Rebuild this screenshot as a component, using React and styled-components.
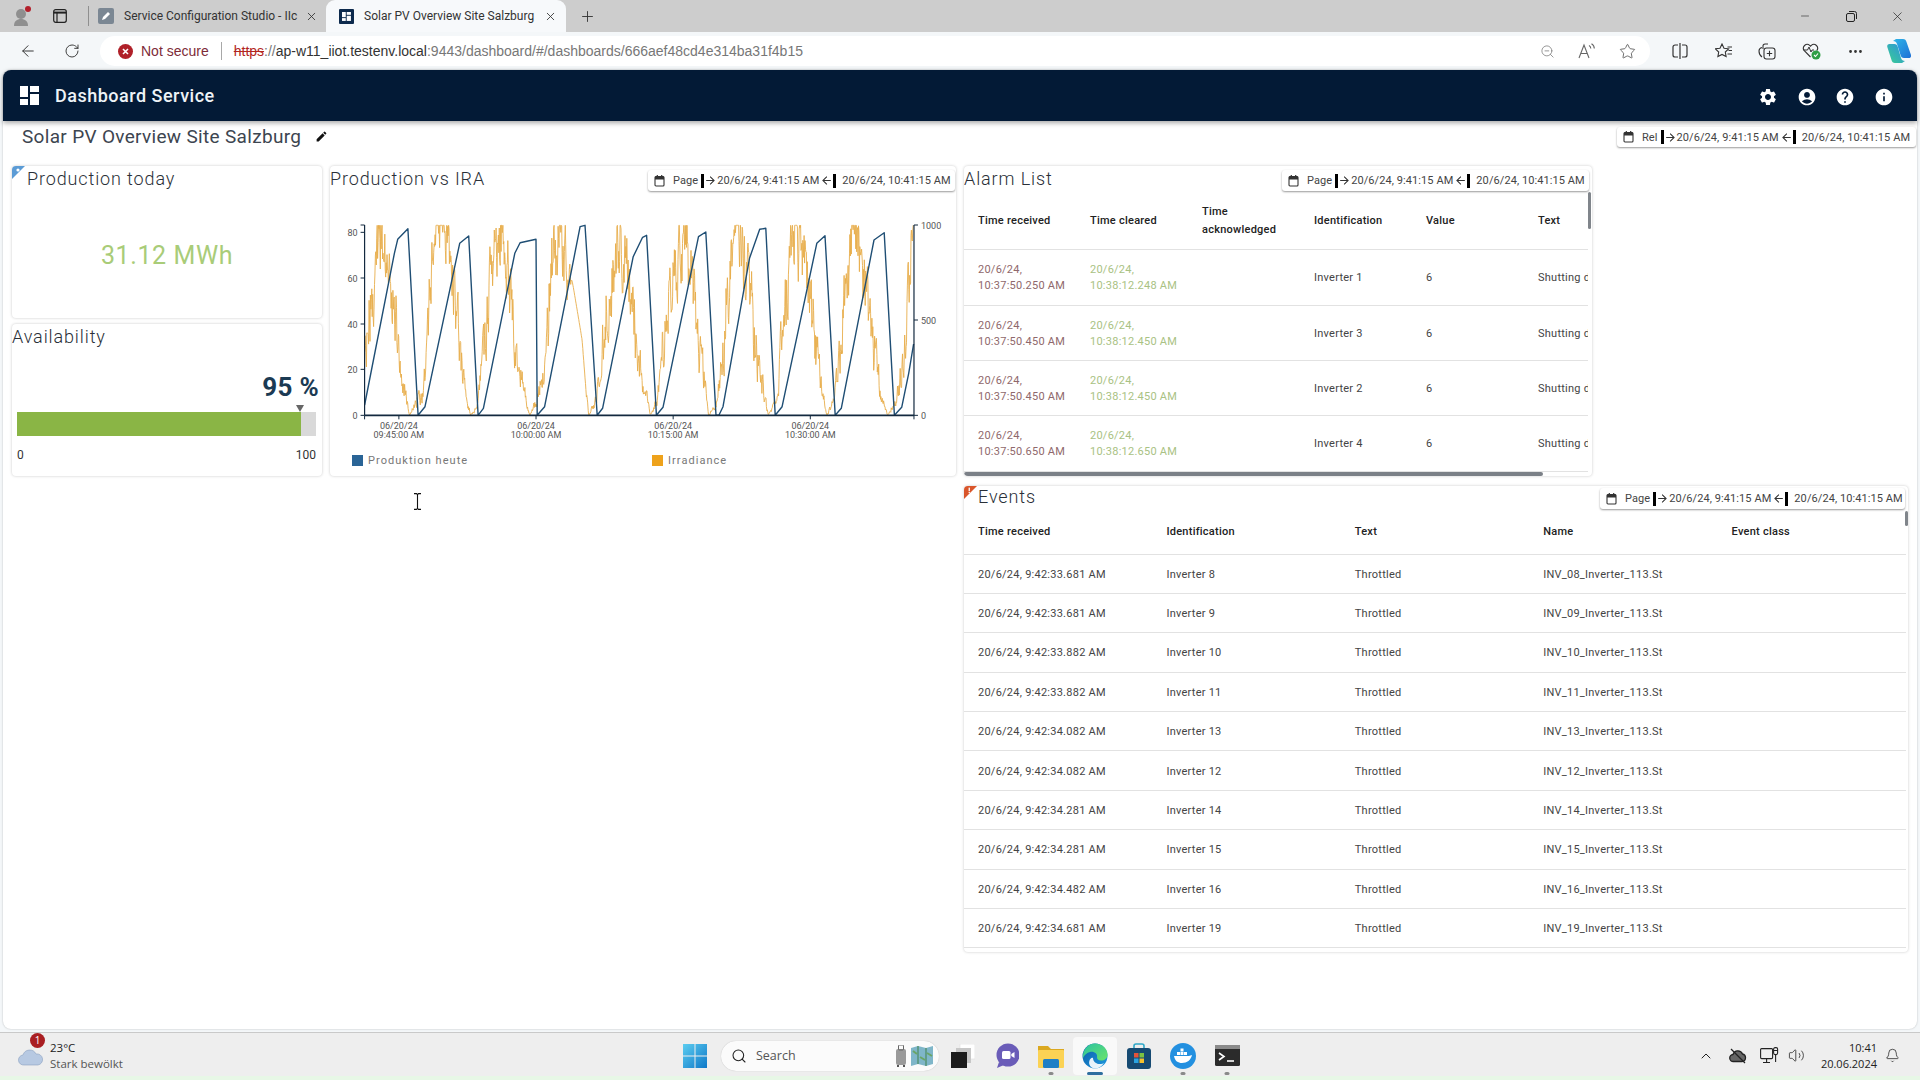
import React from 'react';
import styled, { createGlobalStyle } from 'styled-components';
import { ArrowLeft, RotateCw, ZoomOut, Star, MoreHorizontal, X, Plus, Minus, Search, ChevronUp, Bell, Volume2 } from 'lucide-react';
import { MdSettings, MdAccountCircle, MdHelp, MdInfo, MdEdit, MdArrowForward, MdArrowBack } from 'react-icons/md';

const Global = createGlobalStyle`
  html, body { margin: 0; padding: 0; height: 100%; overflow: hidden; background: #f4f7f9; }
  body { font-family: Roboto, "Liberation Sans", sans-serif; color: #222; }
  * { box-sizing: border-box; }
`;

const Screen = styled.div`
  width: 1920px; height: 1080px; display: flex; flex-direction: column; position: relative; overflow: hidden;
`;

/* ---------- browser chrome ---------- */
const TabStrip = styled.div`
  height: 32px; background: #cdcdcd; display: flex; align-items: stretch; padding-left: 12px; flex: none;
  font-family: Roboto, sans-serif;
`;
const StripIcon = styled.div`
  display: flex; align-items: center; justify-content: center; width: ${p => p.$w}px; margin-left: ${p => p.$ml || 0}px;
`;
const TabSep = styled.div`
  width: 1px; height: 20px; background: #8f8f8f; align-self: center; margin: 0 9px 0 20px;
`;
const Tab = styled.div`
  width: ${p => p.$w}px; display: flex; align-items: center; position: relative; padding-left: ${p => p.$pl}px; gap: ${p => p.$gap}px;
  font-size: 12px; color: #333; white-space: nowrap;
  background: ${p => p.$active ? '#f7f9fb' : 'transparent'};
  border-radius: ${p => p.$active ? '9px 9px 0 0' : '0'};
`;
const TabLabel = styled.span`
  width: ${p => p.$w}px; display: block;
`;
const TabClose = styled.span`
  display: flex; align-items: center; justify-content: center; width: 16px; margin-left: ${p => p.$ml}px; color: #333;
`;
const NewTab = styled.div`
  display: flex; align-items: center; margin-left: 13px; color: #333;
`;
const WindowControls = styled.div`
  margin-left: auto; display: flex;
`;
const WinButton = styled.div`
  width: 46px; display: flex; align-items: center; justify-content: center; color: #222;
`;

const Toolbar = styled.div`
  height: 38px; background: #f4f7f9; display: flex; align-items: center; padding-left: 6px; flex: none;
  font-family: "Liberation Sans", sans-serif;
`;
const NavButton = styled.div`
  width: ${p => p.$w || 44}px; height: 30px; display: flex; align-items: center; justify-content: center; color: ${p => p.$c || '#333'}; flex: none;
`;
const AddressPill = styled.div`
  width: 1550px; height: 30px; margin-left: 6px; background: #fff; border-radius: 15px; display: flex; align-items: center; padding: 0 3px 0 18px; font-size: 14px; flex: none;
`;
const NotSecure = styled.span`
  color: #7d2b38; margin-left: 8px;
`;
const AddrSep = styled.span`
  width: 1px; height: 18px; background: #a8a8a8; margin: 0 12px 0 12px;
`;
const Url = styled.span`
  color: #777; white-space: nowrap; flex: 1;
  s { color: #b3261e; }
  b { font-weight: 400; color: #333; }
`;
const PillIcons = styled.div`
  display: flex; color: #666;
`;
const ToolIcons = styled.div`
  display: flex; margin-left: 8px;
`;

/* ---------- app ---------- */
const AppFrame = styled.div`
  flex: 1; min-height: 0; margin: 0 3px 3px; background: #fff; border-radius: 8px; display: flex; flex-direction: column;
  box-shadow: 0 0 2px rgba(0,0,0,.25); position: relative;
`;
const AppHeader = styled.header`
  height: 51px; background: #031a36; border-radius: 8px 8px 0 0; display: flex; align-items: center; padding: 0 23.500px 0 17px; color: #fff; flex: none;
  box-shadow: 0 2px 5px rgba(0,0,0,.35);
`;
const AppTitle = styled.div`
  font-size: 18px; font-weight: 500; margin-left: 16px; letter-spacing: .5px; color: #eef3f7;
`;
const HeaderIcons = styled.div`
  margin-left: auto; display: flex; gap: 18.500px; padding-top: 2px;
`;
const TitleRow = styled.div`
  height: 45px; flex: none; display: flex; align-items: flex-start; justify-content: space-between; padding: 5px 1px 0 19px;
`;
const PageTitle = styled.h1`
  margin: 0; font-size: 19px; font-weight: 400; line-height: 21px; letter-spacing: .32px; color: #3d4550; display: flex; align-items: center; gap: 14px;
`;
const Board = styled.div`
  display: grid; grid-template-columns: 310px 626px 628px 308px; grid-template-rows: 152px 152px 470px; column-gap: 8px; row-gap: 6px; padding-left: 9px;
`;
const Card = styled.section`
  background: #fff; border-radius: 4px; box-shadow: 0 0 3px rgba(0,0,0,.22); position: relative;
  grid-column: ${p => p.$col}; grid-row: ${p => p.$row}; margin-top: ${p => p.$mt || 0}px; overflow: hidden; min-width: 0;
  display: flex; flex-direction: column;
`;
const CardHead = styled.div`
  height: 25px; display: flex; align-items: flex-start; justify-content: space-between; flex: none; padding: 0 ${p => p.$pr ?? 1}px 0 ${p => p.$pl ?? 0}px;
`;
const CardTitle = styled.h2`
  margin: ${p => p.$mt ?? 3}px 0 0; font-size: 18px; line-height: 20px; font-weight: 300; letter-spacing: .88px; color: #2a3038; white-space: nowrap;
`;
const Corner = styled.svg`
  position: absolute; left: 0; top: 0; width: 13px; height: 13px;
`;
const Picker = styled.div`
  flex: none; margin-top: ${p => p.$mt}px; height: ${p => p.$h}px; width: ${p => p.$w}px; display: flex; align-items: center; background: #fff; border-radius: 3px;
  box-shadow: 0 1px 2px rgba(0,0,0,.4); padding-left: 6px; font-size: 11px; letter-spacing: .08px; color: #444; white-space: nowrap; overflow: hidden;
`;
const PickerKind = styled.span`
  margin-left: 8px; margin-right: 3px;
`;
const PickerBar = styled.span`
  width: 3px; height: 14px; background: #000; flex: none; margin: 0 ${p => p.$mr || 0}px 0 ${p => p.$ml || 0}px;
`;
const BigValue = styled.div`
  flex: 1; display: flex; align-items: center; justify-content: center; font-size: 25px; letter-spacing: .6px; color: #a9cc78; padding-top: 2px;
`;
const GaugeBody = styled.div`
  padding: 23px 6px 0 5px; display: flex; flex-direction: column;
`;
const GaugeValue = styled.div`
  text-align: right; font-size: 26px; line-height: 30px; font-weight: 700; color: #1b3a53; margin-right: -3px; letter-spacing: .3px;
`;
const GaugeMarker = styled.div`
  height: 10px; position: relative;
  &::after { content: ''; position: absolute; left: 279px; top: 3px; border: 4px solid transparent; border-top: 7px solid #666; border-bottom: 0; }
`;
const GaugeTrack = styled.div`
  height: 24px; background: #d9d9d9;
`;
const GaugeFill = styled.div`
  height: 100%; background: #8ab545;
`;
const GaugeScale = styled.div`
  display: flex; justify-content: space-between; font-size: 12px; margin-top: 12px; color: #333;
`;
const ChartSvg = styled.svg`
  display: block; flex: none;
  text { font-family: Roboto, sans-serif; font-size: 9px; fill: #555; }
`;
const Legend = styled.div`
  display: flex; padding-left: 22px; margin-top: 1px;
`;
const LegendItem = styled.div`
  width: 300px; display: flex; align-items: center; gap: 5px; font-size: 11px; letter-spacing: 1.05px; color: #777;
  i { width: 11px; height: 11px; background: ${p => p.$c}; display: block; }
`;
const TableClip = styled.div`
  flex: 1; min-height: 0; overflow: hidden; width: ${p => p.$w}px; position: relative;
`;
const Table = styled.table`
  border-collapse: collapse; table-layout: fixed; width: ${p => p.$w}px; font-size: 11px; letter-spacing: .25px;
`;
const HeadRow = styled.tr`
  height: ${p => p.$h}px; border-bottom: 1px solid #e2e2e2;
`;
const Row = styled.tr`
  height: ${p => p.$h}px; border-bottom: 1px solid #e2e2e2;
`;
const Th = styled.th`
  text-align: left; font-weight: 500; padding: ${p => p.$pt || 0}px 10px 0 14px; line-height: 18px; color: #222;
`;
const Td = styled.td`
  padding: 2px 10px 0 14px; line-height: 16px; color: ${p => p.$c || '#444'}; white-space: ${p => p.$wrap ? 'normal' : 'nowrap'}; overflow: hidden;
`;
const HScroll = styled.div`
  position: absolute; left: 0; bottom: 0; height: 4px; width: 579px; background: #7b8087; border-radius: 2px;
`;
const VScroll = styled.div`
  position: absolute; right: ${p => p.$r}px; top: ${p => p.$t}px; width: 3px; height: ${p => p.$h}px; background: #80858b; border-radius: 2px;
`;
const IBeam = styled.svg`
  position: absolute; left: 410px; top: 423px; width: 9px; height: 17px;
`;

/* ---------- taskbar ---------- */
const Taskbar = styled.div`
  height: 44px; background: #eeeeee; border-top: 1px solid #c9c9c9; display: grid; grid-template-columns: 683px auto 1fr; align-items: center; flex: none; padding-top: 2px;
  font-family: "Open Sans", "Liberation Sans", sans-serif;
`;
const GreenStrip = styled.div`
  height: 4px; background: #e7f7e6; flex: none;
`;
const Weather = styled.div`
  display: flex; align-items: center; padding-left: 18px; gap: 6px; position: relative;
`;
const WeatherBadge = styled.span`
  position: absolute; left: 30px; top: -7px; width: 15px; height: 15px; border-radius: 50%; background: #a91e22; color: #fff; font-size: 10px; display: flex; align-items: center; justify-content: center;
`;
const WeatherText = styled.div`
  font-size: 11.500px; line-height: 16px; color: #222; span { display: block; color: #555; }
`;
const Center = styled.div`
  display: flex; align-items: center;
`;
const SearchBox = styled.div`
  width: 218px; height: 30px; margin: 0 2px 0 14px; background: #fbfbfb; border-radius: 15px; display: flex; align-items: center; padding-left: 10px; gap: 9px; font-size: 12.500px; color: #555;
  box-shadow: 0 0 1px rgba(0,0,0,.25);
`;
const SearchPics = styled.div`
  margin-left: auto; display: flex; gap: 4px; padding-right: 6px; align-items: center;
`;
const Slot = styled.div`
  width: 44px; height: 38px; display: flex; align-items: center; justify-content: center; position: relative; border-radius: 4px;
  background: ${p => p.$active ? '#f9f9f9' : 'transparent'};
  &::after {
    content: ${p => p.$dot ? "''" : 'none'}; position: absolute; bottom: 0; left: 50%; transform: translateX(-50%);
    width: ${p => p.$active ? 16 : 5}px; height: 3px; border-radius: 2px; background: ${p => p.$active ? '#2f6f9f' : '#8a8a8a'};
  }
`;
const Tray = styled.div`
  display: flex; align-items: center; justify-content: flex-end; padding-right: 19px; color: #222;
`;
const TrayIcon = styled.div`
  display: flex; align-items: center; justify-content: center; width: ${p => p.$w}px;
`;
const Clock = styled.div`
  font-size: 11px; line-height: 16px; text-align: right; margin: 0 6px 0 12px; color: #222;
`;

/* ---------- data ---------- */
const sx = zx => zx / 2.45 - 5;
const sy = zy => zy / 3 - 31;
const BLUE = [[97,735],[170,280],[178,238],[203,206],[228,766],[245,740],[330,250],[352,228],[375,766],[388,745],[465,280],[478,248],[517,238],[520,766],[538,740],[625,200],[637,196],[667,766],[680,745],[755,290],[778,232],[788,226],[812,766],[828,742],[915,230],[933,216],[958,766],[965,766],[975,740],[1040,295],[1065,208],[1080,205],[1103,766],[1120,740],[1205,250],[1225,227],[1250,766],[1265,745],[1345,240],[1370,218],[1395,766],[1413,742],[1430,640],[1442,552]];
const ENV = [[97,620],[110,450],[125,300],[140,230],[155,300],[170,450],[185,600],[200,720],[207,766],[225,720],[240,700],[255,430],[268,250],[283,200],[300,280],[320,400],[335,600],[350,720],[356,766],[372,745],[395,500],[405,350],[435,220],[450,350],[465,500],[480,650],[497,750],[502,766],[520,720],[540,620],[555,300],[578,230],[600,320],[630,540],[640,700],[646,766],[665,720],[690,450],[722,220],[745,350],[760,500],[775,640],[790,720],[797,766],[815,720],[840,400],[880,240],[900,380],[920,560],[935,720],[940,766],[960,730],[985,400],[1010,210],[1030,320],[1050,480],[1070,660],[1086,766],[1105,720],[1125,480],[1150,220],[1175,320],[1195,480],[1215,680],[1230,766],[1248,720],[1265,520],[1300,210],[1325,380],[1345,550],[1365,720],[1378,766],[1400,720],[1420,600],[1430,330],[1442,220]];

function irradiancePath() {
  let seed = 12345;
  const rnd = () => { seed = (seed * 1664525 + 1013904223) >>> 0; return seed / 4294967296; };
  const out = [];
  let j = 0;
  let prev = 0;
  for (let x = 97; x <= 1442; x += 1.1) {
    while (j < ENV.length - 2 && ENV[j + 1][0] < x) j++;
    const [x0, y0] = ENV[j]; const [x1, y1] = ENV[j + 1];
    const base = y0 + (y1 - y0) * (x - x0) / (x1 - x0);
    const smooth = x > 602 && x < 640;
    const amp = smooth ? 0 : Math.min(110, (770 - base) * 0.4);
    prev = prev * 0.5 + (rnd() - 0.5) * amp * 1.7;
    const y = Math.max(196, Math.min(766, base + prev));
    out.push(`${sx(x).toFixed(1)},${sy(y).toFixed(1)}`);
  }
  return out.join(' ');
}
const ORANGE = irradiancePath();
const BLUE_PTS = BLUE.map(([x, y]) => `${sx(x).toFixed(1)},${sy(y).toFixed(1)}`).join(' ');

const ALARMS = [
  ['20/6/24, 10:37:50.250 AM', '20/6/24, 10:38:12.248 AM', 'Inverter 1', 56],
  ['20/6/24, 10:37:50.450 AM', '20/6/24, 10:38:12.450 AM', 'Inverter 3', 55],
  ['20/6/24, 10:37:50.450 AM', '20/6/24, 10:38:12.450 AM', 'Inverter 2', 55],
  ['20/6/24, 10:37:50.650 AM', '20/6/24, 10:38:12.650 AM', 'Inverter 4', 56],
];
const EVENTS = [
  ['9:42:33.681', '8', '08'], ['9:42:33.681', '9', '09'], ['9:42:33.882', '10', '10'], ['9:42:33.882', '11', '11'],
  ['9:42:34.082', '13', '13'], ['9:42:34.082', '12', '12'], ['9:42:34.281', '14', '14'], ['9:42:34.281', '15', '15'],
  ['9:42:34.482', '16', '16'], ['9:42:34.681', '19', '19'],
];

/* ---------- small drawings ---------- */
const Calendar = () => (
  <svg width="11" height="12" viewBox="0 0 11 12" style={{ flex: 'none' }}>
    <rect x="1" y="1.5" width="9" height="9.5" rx="1" fill="none" stroke="#333" strokeWidth="1.1" />
    <rect x="1" y="1.5" width="9" height="3" fill="#333" />
    <rect x="2.7" y="0" width="1.2" height="2" fill="#333" /><rect x="7.1" y="0" width="1.2" height="2" fill="#333" />
  </svg>
);
const DateRange = ({ kind, w, mt = 4, h = 21 }) => (
  <Picker $w={w} $mt={mt} $h={h}>
    <Calendar />
    <PickerKind>{kind}</PickerKind>
    <PickerBar />
    <MdArrowForward size={13} color="#333" />
    <span>20/6/24, 9:41:15 AM</span>
    <MdArrowBack size={13} color="#333" style={{ marginLeft: 1 }} />
    <PickerBar $mr={6} />
    <span>20/6/24, 10:41:15 AM</span>
  </Picker>
);
const BoardLogo = ({ size = 19, c = '#fff' }) => (
  <svg width={size} height={size} viewBox="0 0 19 19" fill={c}>
    <rect x="0" y="0" width="8" height="11" /><rect x="10" y="0" width="9" height="6" />
    <rect x="10" y="8" width="9" height="11" /><rect x="0" y="13" width="8" height="6" />
  </svg>
);

function Chart() {
  const L = sx(97), R = sx(1443), T = sy(195), B = sy(766);
  const yTicks = [[80, 217], [60, 354], [40, 492], [20, 628], [0, 766]];
  const xTicks = [[181, '09:45:00 AM'], [517, '10:00:00 AM'], [853, '10:15:00 AM'], [1189, '10:30:00 AM']];
  return (
    <ChartSvg width="626" height="262" viewBox="0 0 626 262">
      <polyline points={ORANGE} fill="none" stroke="#e8ae4c" strokeWidth=".9" strokeLinejoin="round" />
      <polyline points={BLUE_PTS} fill="none" stroke="#1f4e74" strokeWidth="1.4" strokeLinejoin="round" />
      <g stroke="#13293f" fill="none">
        <path d={`M${L} ${T}V${B}`} strokeWidth="1.2" />
        <path d={`M${R} ${T}V${B}`} strokeWidth="1.2" />
        <path d={`M${L} ${B}H${R}`} strokeWidth="1.8" />
        <path d={`M${L - 4} ${T}H${L}M${R} ${T}h4M${R} ${sy(480)}h4M${R} ${B}h4`} strokeWidth="1" />
        {yTicks.map(([, z]) => <path key={z} d={`M${L - 4} ${sy(z)}H${L}`} strokeWidth="1" />)}
        <path d={`M${L} ${B}v4`} strokeWidth="1" />
        <path d={`M${R} ${B}v4`} strokeWidth="1" />
        {xTicks.map(([z]) => <path key={z} d={`M${sx(z)} ${B}v4`} strokeWidth="1" />)}
      </g>
      {yTicks.map(([v, z]) => <text key={v} x={L - 7} y={sy(z) + 3.5} textAnchor="end">{v}</text>)}
      <text x={R + 7} y={T + 3.5}>1000</text>
      <text x={R + 7} y={sy(480) + 3.5}>500</text>
      <text x={R + 7} y={B + 3.5}>0</text>
      {xTicks.map(([z, t]) => (
        <text key={z} textAnchor="middle" x={sx(z)}>
          <tspan x={sx(z)} y={B + 14}>06/20/24</tspan>
          <tspan x={sx(z)} y={B + 23}>{t}</tspan>
        </text>
      ))}
    </ChartSvg>
  );
}

export default function App() {
  return (
    <Screen>
      <Global />
      <TabStrip>
        <StripIcon $w={22}>
          <svg width="22" height="24" viewBox="0 0 22 24">
            <circle cx="9" cy="10" r="5" fill="#8f8f8f" />
            <path d="M2 22c0-5 3-7 7-7s7 2 7 7z" fill="#8f8f8f" />
            <circle cx="16" cy="5" r="3" fill="#b3202c" />
          </svg>
        </StripIcon>
        <StripIcon $w={16} $ml={18}>
          <svg width="14" height="14" viewBox="0 0 14 14" fill="none" stroke="#222" strokeWidth="1.2">
            <rect x=".7" y=".7" width="12.6" height="12.6" rx="2" /><path d="M.7 3.6h12.6" strokeWidth="2" /><path d="M4 3.6v9.7" />
          </svg>
        </StripIcon>
        <TabSep />
        <Tab $w={228} $pl={0} $gap={10}>
          <svg width="16" height="16" viewBox="0 0 16 16"><rect width="16" height="16" rx="2" fill="#7b8793" /><path d="M4 12l1-3 5-5 2 2-5 5z" fill="#fff" /></svg>
          <TabLabel $w={172}>Service Configuration Studio - IIc</TabLabel>
          <TabClose $ml={7 - 10}><X size={13} strokeWidth={1.6} /></TabClose>
        </Tab>
        <Tab $w={240} $pl={13} $gap={10} $active>
          <svg width="15" height="15" viewBox="0 0 15 15"><rect width="15" height="15" rx="1" fill="#0d2a4d" /><g transform="translate(3 3) scale(.47)"><BoardLogo /></g></svg>
          <TabLabel $w={168}>Solar PV Overview Site Salzburg</TabLabel>
          <TabClose $ml={0}><X size={13} strokeWidth={1.6} /></TabClose>
        </Tab>
        <NewTab><Plus size={17} strokeWidth={1.3} /></NewTab>
        <WindowControls>
          <WinButton><Minus size={12} strokeWidth={1.2} /></WinButton>
          <WinButton>
            <svg width="11" height="11" viewBox="0 0 11 11" fill="none" stroke="#222"><rect x=".5" y="2.5" width="8" height="8" rx="1.5" /><path d="M3 .5h5.5a2 2 0 012 2V8" /></svg>
          </WinButton>
          <WinButton><X size={15} strokeWidth={1.1} /></WinButton>
        </WindowControls>
      </TabStrip>

      <Toolbar>
        <NavButton><ArrowLeft size={18} strokeWidth={1.3} /></NavButton>
        <NavButton><RotateCw size={16} strokeWidth={1.4} /></NavButton>
        <AddressPill>
          <svg width="15" height="15" viewBox="0 0 15 15" style={{ flex: 'none' }}>
            <circle cx="7.5" cy="7.5" r="7.5" fill="#b02029" />
            <path d="M5 5l5 5M10 5l-5 5" stroke="#fff" strokeWidth="1.6" />
          </svg>
          <NotSecure>Not secure</NotSecure>
          <AddrSep />
          <Url><s>https</s>://<b>ap-w11_iiot.testenv.local</b>:9443/dashboard/#/dashboards/666aef48cd4e314ba31f4b15</Url>
          <PillIcons>
            <NavButton $w={40} $c="#777"><ZoomOut size={15} strokeWidth={1.2} /></NavButton>
            <NavButton $w={40} $c="#666">
              <svg width="18" height="16" viewBox="0 0 18 16" fill="none" stroke="#666" strokeWidth="1.1"><path d="M1 15L6 2l5 13M3 10.5h6" /><path d="M11 2.5c1.2.7 1.8 1.8 1.8 3M13.5.8c1.7 1 2.8 2.7 2.8 4.8" /></svg>
            </NavButton>
            <NavButton $w={40} $c="#555"><Star size={17} strokeWidth={1.2} /></NavButton>
          </PillIcons>
        </AddressPill>
        <ToolIcons>
          <NavButton $w={43.8}>
            <svg width="16" height="16" viewBox="0 0 16 16" fill="none" stroke="#333" strokeWidth="1.2"><path d="M6 2H3a2 2 0 00-2 2v8a2 2 0 002 2h3M10 2h3a2 2 0 012 2v8a2 2 0 01-2 2h-3M8 0v16" /></svg>
          </NavButton>
          <NavButton $w={43.8}>
            <svg width="18" height="16" viewBox="0 0 18 16" fill="none" stroke="#333" strokeWidth="1.1"><path d="M7 1l2 4.2 4.6.6-3.3 3.2.8 4.6L7 11.4 2.9 13.6l.8-4.6L.4 5.8 5 5.2z" /><path d="M12.5 4H17M13.5 7.5H17M12.5 11H17" /></svg>
          </NavButton>
          <NavButton $w={43.8}>
            <svg width="18" height="17" viewBox="0 0 18 17" fill="none" stroke="#333" strokeWidth="1.1"><path d="M4 4.5C2 5 1 6 1 8c0 3 1.5 5 3 6M5 6V3a2 2 0 012-2h3" /><rect x="6" y="5" width="11" height="11" rx="2.5" /><path d="M11.5 7.8v5.4M8.8 10.5h5.4" /></svg>
          </NavButton>
          <NavButton $w={43.8}>
            <svg width="19" height="18" viewBox="0 0 19 18">
              <path d="M8.5 15L2.3 8.6a3.8 3.8 0 015.4-5.3l.8.8.8-.8a3.8 3.8 0 015.4 5.3" fill="none" stroke="#333" strokeWidth="1.1" />
              <path d="M1.5 8h4l1.5-3 2 5 1-2h2" fill="none" stroke="#333" strokeWidth="1" />
              <circle cx="14" cy="13" r="4.5" fill="#2f9e44" /><path d="M12 13l1.5 1.5 2.5-3" stroke="#fff" fill="none" strokeWidth="1.1" />
            </svg>
          </NavButton>
          <NavButton $w={43.8}><MoreHorizontal size={17} strokeWidth={2} /></NavButton>
          <NavButton $w={43.8}>
            <svg width="24" height="26" viewBox="0 0 24 26">
              <defs>
                <linearGradient id="cp1" x1="0" y1="0" x2="1" y2="1"><stop offset="0" stopColor="#2fb6e8" /><stop offset="1" stopColor="#1d6fd6" /></linearGradient>
                <linearGradient id="cp2" x1="0" y1="1" x2="1" y2="0"><stop offset="0" stopColor="#3ccf91" /><stop offset="1" stopColor="#2b8fe0" /></linearGradient>
              </defs>
              <path d="M9 1h7c2 0 3 1 3.5 3L24 17c.5 2-1 3-2 3h-5c-2 0-3-1-3.5-3L10 6C9.5 4 8 3 6 3z" fill="url(#cp1)" />
              <path d="M15 25H8c-2 0-3-1-3.5-3L.3 9c-.5-2 1-3 2-3h5c2 0 3 1 3.5 3L14 20c.5 2 2 3 4 3z" fill="url(#cp2)" />
            </svg>
          </NavButton>
        </ToolIcons>
      </Toolbar>

      <AppFrame>
        <AppHeader>
          <BoardLogo />
          <AppTitle>Dashboard Service</AppTitle>
          <HeaderIcons>
            <MdSettings size={20} /><MdAccountCircle size={20} /><MdHelp size={20} /><MdInfo size={20} />
          </HeaderIcons>
        </AppHeader>
        <TitleRow>
          <PageTitle>Solar PV Overview Site Salzburg <MdEdit size={13} color="#111" /></PageTitle>
          <DateRange kind="Rel" w={299} mt={1} h={20} />
        </TitleRow>
        <Board>
          <Card $col="1" $row="1">
            <Corner viewBox="0 0 13 13"><path d="M0 0h13L0 13z" fill="#5b9bd5" /><circle cx="6" cy="4" r="1.6" fill="#fff" /></Corner>
            <CardHead $pl={15}><CardTitle>Production today</CardTitle></CardHead>
            <BigValue>31.12 MWh</BigValue>
          </Card>
          <Card $col="1" $row="2">
            <CardHead><CardTitle>Availability</CardTitle></CardHead>
            <GaugeBody>
              <GaugeValue>95 %</GaugeValue>
              <GaugeMarker />
              <GaugeTrack><GaugeFill style={{ width: '95%' }} /></GaugeTrack>
              <GaugeScale><span>0</span><span>100</span></GaugeScale>
            </GaugeBody>
          </Card>
          <Card $col="2" $row="1 / span 2">
            <CardHead>
              <CardTitle>Production vs IRA</CardTitle>
              <DateRange kind="Page" w={307} />
            </CardHead>
            <Chart />
            <Legend>
              <LegendItem $c="#2a6496"><i />Produktion heute</LegendItem>
              <LegendItem $c="#eea21b"><i />Irradiance</LegendItem>
            </Legend>
          </Card>
          <Card $col="3" $row="1 / span 2">
            <CardHead $pr={3}>
              <CardTitle>Alarm List</CardTitle>
              <DateRange kind="Page" w={307} />
            </CardHead>
            <TableClip $w={624}>
              <Table $w={672}>
                <colgroup>{[0, 1, 2, 3, 4, 5].map(i => <col key={i} width="112" />)}</colgroup>
                <thead>
                  <HeadRow $h={58}>
                    {['Time received', 'Time cleared', 'Time acknowledged', 'Identification', 'Value', 'Text'].map(t => <Th key={t} $pt={2}>{t}</Th>)}
                  </HeadRow>
                </thead>
                <tbody>
                  {ALARMS.map(([a, b, c, h], i) => (
                    <Row key={i} $h={h}>
                      <Td $wrap $c="#8f686b">{a}</Td>
                      <Td $wrap $c="#a9c283">{b}</Td>
                      <Td />
                      <Td>{c}</Td>
                      <Td>6</Td>
                      <Td>Shutting down</Td>
                    </Row>
                  ))}
                </tbody>
              </Table>
              <HScroll />
            </TableClip>
            <VScroll $r={1} $t={26} $h={37} />
          </Card>
          <Card $col="3 / span 2" $row="3" $mt={4}>
            <Corner viewBox="0 0 13 13"><path d="M0 0h13L0 13z" fill="#d9552a" /><rect x="4.6" y="1.6" width="1.3" height="3.4" fill="#fff" /><rect x="4.6" y="5.8" width="1.3" height="1.3" fill="#fff" /></Corner>
            <CardHead $pl={14} $pr={3}>
              <CardTitle $mt={1}>Events</CardTitle>
              <DateRange kind="Page" w={305} mt={2} />
            </CardHead>
            <TableClip $w={944}>
              <Table $w={942}>
                <colgroup>{[0, 1, 2, 3, 4].map(i => <col key={i} width="188.4" />)}</colgroup>
                <thead>
                  <HeadRow $h={43}>
                    <Th>Time received</Th><Th>Identification</Th><Th>Text</Th><Th>Name</Th><Th>Event class</Th>
                  </HeadRow>
                </thead>
                <tbody>
                  {EVENTS.map(([t, n, id], i) => (
                    <Row key={i} $h={39.4}>
                      <Td>{`20/6/24, ${t} AM`}</Td>
                      <Td>{`Inverter ${n}`}</Td>
                      <Td>Throttled</Td>
                      <Td>{`INV_${id}_Inverter_113.St`}</Td>
                      <Td />
                    </Row>
                  ))}
                </tbody>
              </Table>
            </TableClip>
            <VScroll $r={0} $t={25} $h={15} />
          </Card>
        </Board>
        <IBeam viewBox="0 0 9 17" fill="none" stroke="#111" strokeWidth="1.1"><path d="M1 .6h2.5l1 1 1-1H8M4.5 1.6v13.8M1 16.4h2.5l1-1 1 1H8" /></IBeam>
      </AppFrame>

      <Taskbar>
        <Weather>
          <svg width="26" height="20" viewBox="0 0 26 20">
            <path d="M6 19a5 5 0 01-1-10 7 7 0 0113-1 5.5 5.5 0 012 11z" fill="#b7c9e2" stroke="#8aa0bf" strokeWidth=".6" />
          </svg>
          <WeatherBadge>1</WeatherBadge>
          <WeatherText>23°C<span>Stark bewölkt</span></WeatherText>
        </Weather>
        <Center>
          <svg width="24" height="24" viewBox="0 0 24 24">
            <defs><linearGradient id="win" x1="0" y1="0" x2="1" y2="1"><stop offset="0" stopColor="#5ccdf0" /><stop offset="1" stopColor="#0f78c8" /></linearGradient></defs>
            <path d="M0 0h11.5v11.5H0zM12.5 0H24v11.5H12.5zM0 12.5h11.5V24H0zM12.5 12.5H24V24H12.5z" fill="url(#win)" />
          </svg>
          <SearchBox>
            <Search size={16} color="#222" strokeWidth={1.6} />
            Search
            <SearchPics>
              <svg width="12" height="22" viewBox="0 0 12 22"><rect x="1" y="4" width="10" height="16" rx="2" fill="#9a9a9a" /><rect x="3.5" y="0" width="5" height="5" rx="1" fill="none" stroke="#666" /><rect x="2" y="20" width="2" height="2" fill="#555" /><rect x="8" y="20" width="2" height="2" fill="#555" /></svg>
              <svg width="22" height="22" viewBox="0 0 22 22"><path d="M0 3l7-2 8 2 7-2v18l-7 2-8-2-7 2z" fill="#7fb6c9" /><path d="M7 1v18M15 3v18" stroke="#4f8f6a" strokeWidth="1.3" /><path d="M2 6l4 3M16 8l5 3M9 12l5 3" stroke="#6aa566" strokeWidth="2" /></svg>
            </SearchPics>
          </SearchBox>
          <Slot>
            <svg width="24" height="24" viewBox="0 0 24 24"><rect x="9" y="0" width="15" height="15" fill="#fff" stroke="#ddd" strokeWidth=".6" /><rect x="5" y="4" width="15" height="15" fill="#c7c7c7" /><rect x="0" y="8" width="16" height="16" fill="#1c1c1c" /></svg>
          </Slot>
          <Slot>
            <svg width="24" height="26" viewBox="0 0 24 26"><circle cx="13" cy="12" r="11.5" fill="#6a5cb8" /><path d="M4 19l-2 6 7-3z" fill="#6a5cb8" /><rect x="7" y="8" width="8.5" height="8" rx="1.5" fill="#fff" /><path d="M16.3 11l3.2-2v6l-3.2-2z" fill="#fff" /></svg>
          </Slot>
          <Slot $dot>
            <svg width="26" height="24" viewBox="0 0 26 24"><path d="M0 2h10l3 3h13v5H0z" fill="#dba820" /><rect y="6" width="26" height="18" rx="1" fill="#fbd254" /><rect x="5" y="15" width="16" height="9" rx="1.5" fill="#1f7fc6" /></svg>
          </Slot>
          <Slot $active $dot>
            <svg width="26" height="26" viewBox="0 0 26 26">
              <defs>
                <linearGradient id="ed1" x1="0" y1="0" x2="1" y2="1"><stop offset="0" stopColor="#2ac3a2" /><stop offset="1" stopColor="#6be36a" /></linearGradient>
                <linearGradient id="ed2" x1="0" y1="0" x2="1" y2="1"><stop offset="0" stopColor="#0c5aa6" /><stop offset="1" stopColor="#1e9be0" /></linearGradient>
              </defs>
              <circle cx="13" cy="13" r="12.5" fill="url(#ed2)" />
              <path d="M1 12C2 5 7 .5 13 .5c7 0 12.500 5 12.500 11 0 4-3 6-6.500 6-3 0-4-1.500-4-3.500 1-3-3-6-7-5C5 9.800 2 12 1 15z" fill="url(#ed1)" />
              <path d="M11 15c0 4 4 6.500 8 6 1 0 2-.5 3-1-2 3.500-5.500 5.500-9 5.500-4 0-7-4-5.500-8 .6-1.600 2-3.500 3.500-2.500z" fill="#fff" opacity=".9" />
            </svg>
          </Slot>
          <Slot>
            <svg width="24" height="26" viewBox="0 0 24 26"><path d="M7 6V3a2 2 0 012-2h6a2 2 0 012 2v3" fill="none" stroke="#2fa8c8" strokeWidth="1.6" /><rect y="5" width="24" height="21" rx="3" fill="#164a72" /><rect x="7" y="10" width="4.500" height="4.500" fill="#e2533a" /><rect x="12.500" y="10" width="4.500" height="4.500" fill="#7cc242" /><rect x="7" y="15.500" width="4.500" height="4.500" fill="#2aa3e0" /><rect x="12.500" y="15.500" width="4.500" height="4.500" fill="#f5c02c" /></svg>
          </Slot>
          <Slot $dot>
            <svg width="26" height="26" viewBox="0 0 26 26"><circle cx="13" cy="13" r="13" fill="#2390e0" /><path d="M4 13h15c1 0 2-1 3-1-1 5-5 8-10 8-4 0-7-2-8-7z" fill="#fff" /><path d="M7 9h3v3H7zM10.500 9h3v3h-3zM14 9h3v3h-3zM10.500 5.500h3v3h-3z" fill="#fff" /></svg>
          </Slot>
          <Slot $dot>
            <svg width="25" height="21" viewBox="0 0 25 21"><rect width="25" height="21" rx="1.5" fill="#2b2b2b" /><rect width="25" height="4" fill="#8a8a8a" /><path d="M4 8l5 3.500L4 15" fill="none" stroke="#fff" strokeWidth="1.6" /><path d="M12 16h7" stroke="#fff" strokeWidth="1.6" /></svg>
          </Slot>
        </Center>
        <Tray>
          <TrayIcon $w={30}><ChevronUp size={16} strokeWidth={1.5} /></TrayIcon>
          <TrayIcon $w={34}>
            <svg width="18" height="16" viewBox="0 0 18 16" fill="none" stroke="#222" strokeWidth="1.3"><path d="M4.500 13.500a3.500 3.500 0 01-.5-7 5 5 0 019.500-.5 3.800 3.800 0 01-.5 7.500z" fill="#666" /><path d="M2 1l14 14" /></svg>
          </TrayIcon>
          <TrayIcon $w={30}>
            <svg width="19" height="18" viewBox="0 0 19 18" fill="none" stroke="#222" strokeWidth="1.1"><rect x=".6" y="1.600" width="12" height="10" rx="1" /><path d="M6.600 11.600V15M3 15.500h7" /><rect x="13.600" y=".6" width="4" height="7" rx="1.500" fill="#eee" /><path d="M15.600 7.600V15M13.600 3.500h4" /></svg>
          </TrayIcon>
          <TrayIcon $w={24}><Volume2 size={17} strokeWidth={1.1} /></TrayIcon>
          <Clock>10:41<br />20.06.2024</Clock>
          <TrayIcon $w={18}><Bell size={15} strokeWidth={1.2} /></TrayIcon>
        </Tray>
      </Taskbar>
      <GreenStrip />
    </Screen>
  );
}
